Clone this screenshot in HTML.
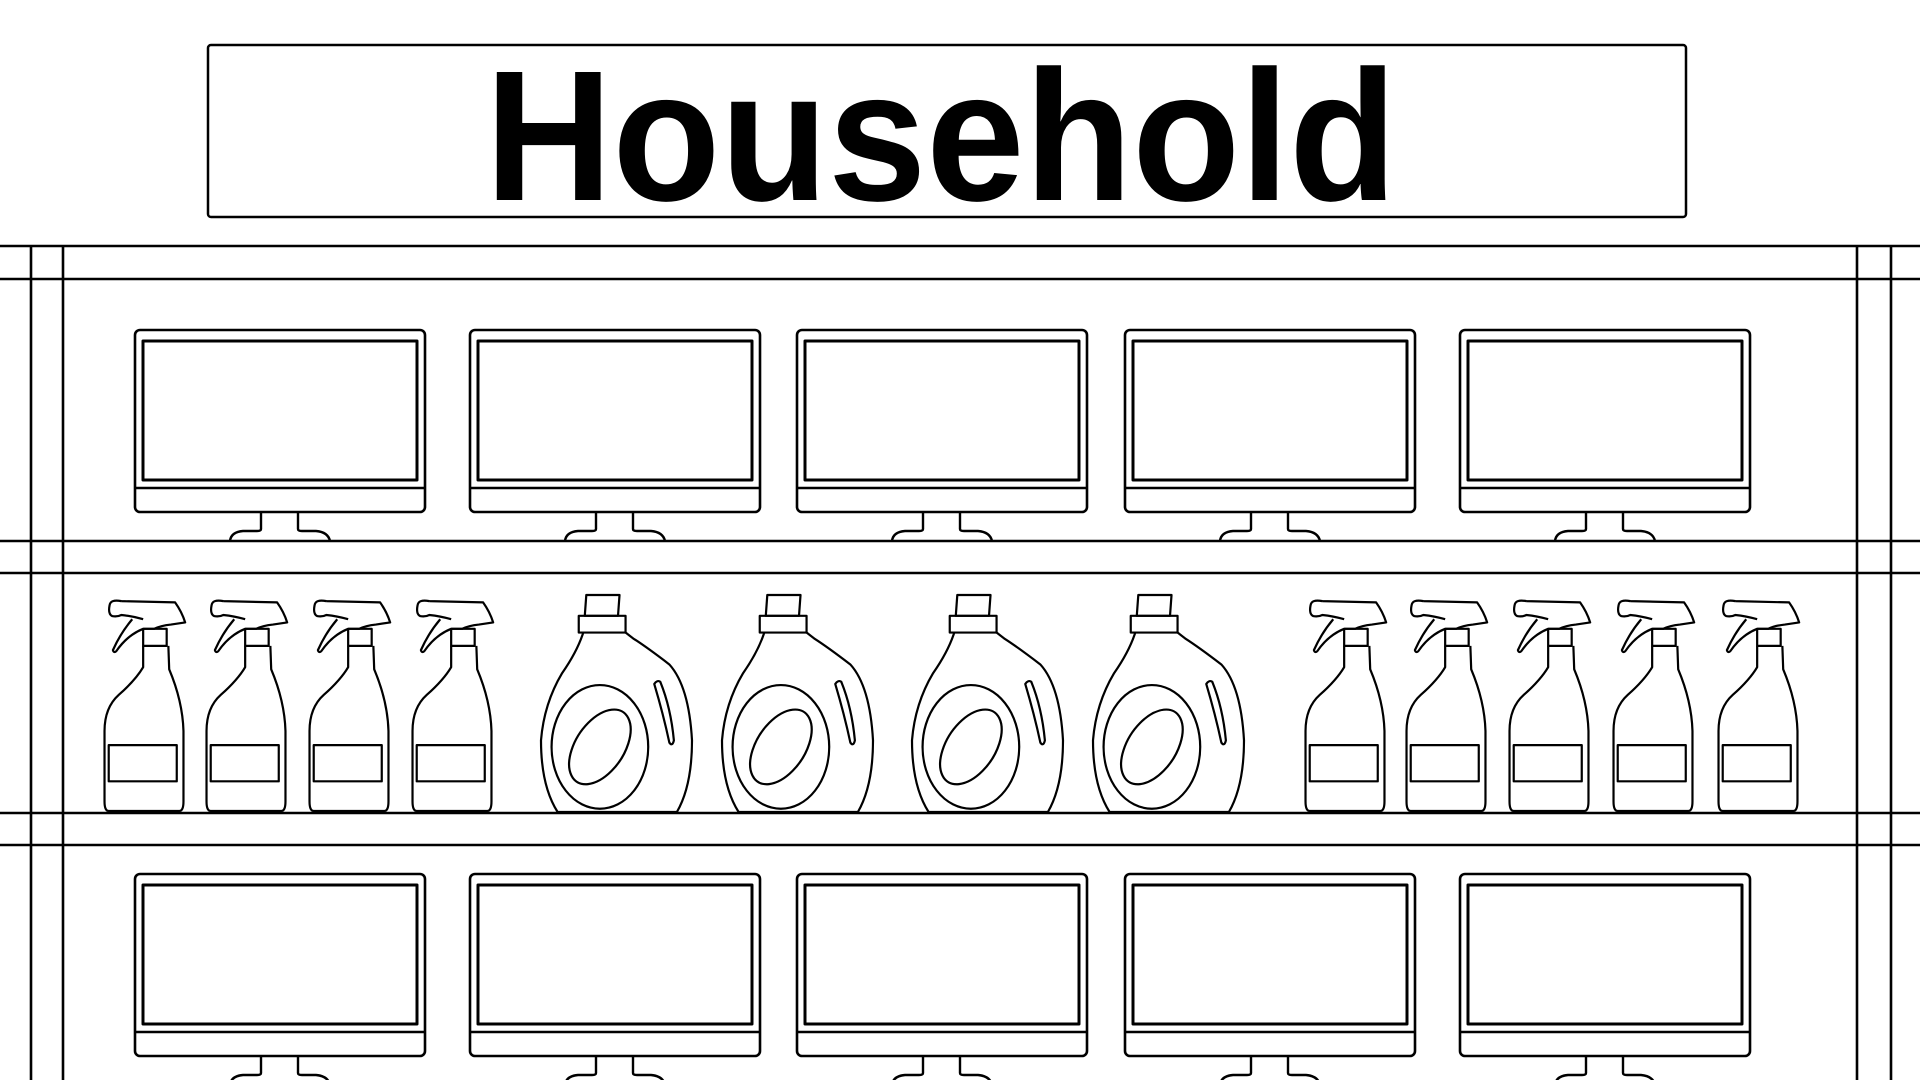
<!DOCTYPE html>
<html><head><meta charset="utf-8"><style>
html,body{margin:0;padding:0;background:#fff;width:1920px;height:1080px;overflow:hidden}
svg{display:block}
</style></head><body>
<svg width="1920" height="1080" viewBox="0 0 1920 1080" xmlns="http://www.w3.org/2000/svg">
<defs>
<symbol id="mon" viewBox="0 0 290 212" overflow="visible">
<g fill="none" stroke="#000" stroke-linejoin="round">
<rect x="0" y="0" width="290" height="182" rx="5" stroke-width="2.6"/>
<rect x="8" y="11" width="274" height="139" stroke-width="3"/>
<line x1="1" y1="158" x2="289" y2="158" stroke-width="2.6"/>
<path d="M126 182 V199 Q126 201 122 201 H108 Q96 202 95 211 M163 182 V199 Q163 201 167 201 H181 Q193 202 195 211" stroke-width="2.4"/>
</g>
</symbol>
<symbol id="spray" viewBox="0 0 100 100" preserveAspectRatio="none" overflow="visible">
<g fill="none" stroke="#000" stroke-width="2.2" stroke-linejoin="round">
<path vector-effect="non-scaling-stroke" d="M23 1 Q10 0 9 3 Q7 7 12 8 Q18 8.5 23 7.5 Q36 8 49 9.5 M23 1 L87 1.6 Q95 6 99 11 L82 12 Q70 12.5 62 14 L49 14"/>
<path vector-effect="non-scaling-stroke" d="M36 9.5 Q22 16 13 24 Q14 25.5 17 24.5 Q30 17 49 14"/>
<path vector-effect="non-scaling-stroke" d="M49 14 H77 V22 H49 Z"/>
<path vector-effect="non-scaling-stroke" d="M49 22 V32 Q40 38 20 45 Q3 51 3 62 V95 Q3 99.5 8 99.5 H92 Q97 99.5 97 95 V62 Q96 48 80 33 L79 22"/>
<rect vector-effect="non-scaling-stroke" x="8" y="68.6" width="81" height="17"/>
</g>
</symbol>
<symbol id="jug" viewBox="0 0 100 100" preserveAspectRatio="none" overflow="visible">
<g fill="none" stroke="#000" stroke-width="2.2" stroke-linejoin="round">
<path vector-effect="non-scaling-stroke" d="M30 0 H52 L51 9.6 H29 Z"/>
<path vector-effect="non-scaling-stroke" d="M25 9.6 H56 V17.3 H25 Z"/>
<path vector-effect="non-scaling-stroke" d="M28 17.3 Q24 26 14 36 Q2 50 0 67 Q0 88 11 100 H90 Q100 88 100 67 Q98 42 85 32 Q70 24 61 20 L56 17.3"/>
<ellipse vector-effect="non-scaling-stroke" cx="39" cy="70" rx="32" ry="28.5"/>
<ellipse vector-effect="non-scaling-stroke" cx="39" cy="70" rx="23" ry="13.5" transform="rotate(-35 39 70)"/>
<path vector-effect="non-scaling-stroke" d="M75 41 Q77 39 79 40 Q86 52 88 67 Q87 70 85 68 Q81 55 75 41 Z"/>
</g>
</symbol>
</defs>
<rect x="208" y="45" width="1478" height="172" rx="3" fill="none" stroke="#000" stroke-width="2.5"/>
<text x="485" y="200" textLength="912" lengthAdjust="spacingAndGlyphs" font-family="Liberation Sans, Arial, sans-serif" font-weight="bold" font-size="186" fill="#000">Household</text>
<g stroke="#000" stroke-width="2.6">
<line x1="0" y1="246" x2="1920" y2="246"/>
<line x1="0" y1="279" x2="1920" y2="279"/>
<line x1="0" y1="541" x2="1920" y2="541"/>
<line x1="0" y1="573" x2="1920" y2="573"/>
<line x1="0" y1="813" x2="1920" y2="813"/>
<line x1="0" y1="845" x2="1920" y2="845"/>
<line x1="31" y1="246" x2="31" y2="1080"/>
<line x1="63" y1="246" x2="63" y2="1080"/>
<line x1="1857" y1="246" x2="1857" y2="1080"/>
<line x1="1891" y1="246" x2="1891" y2="1080"/>
</g>
<use href="#mon" x="135" y="330" width="290" height="212"/>
<use href="#mon" x="470" y="330" width="290" height="212"/>
<use href="#mon" x="797" y="330" width="290" height="212"/>
<use href="#mon" x="1125" y="330" width="290" height="212"/>
<use href="#mon" x="1460" y="330" width="290" height="212"/>
<use href="#mon" x="135" y="874" width="290" height="212"/>
<use href="#mon" x="470" y="874" width="290" height="212"/>
<use href="#mon" x="797" y="874" width="290" height="212"/>
<use href="#mon" x="1125" y="874" width="290" height="212"/>
<use href="#mon" x="1460" y="874" width="290" height="212"/>
<use href="#spray" x="102" y="599" width="84" height="213"/>
<use href="#spray" x="204" y="599" width="84" height="213"/>
<use href="#spray" x="307" y="599" width="84" height="213"/>
<use href="#spray" x="410" y="599" width="84" height="213"/>
<use href="#spray" x="1303" y="599" width="84" height="213"/>
<use href="#spray" x="1404" y="599" width="84" height="213"/>
<use href="#spray" x="1507" y="599" width="84" height="213"/>
<use href="#spray" x="1611" y="599" width="84" height="213"/>
<use href="#spray" x="1716" y="599" width="84" height="213"/>
<use href="#jug" x="541" y="595" width="151" height="217"/>
<use href="#jug" x="722" y="595" width="151" height="217"/>
<use href="#jug" x="912" y="595" width="151" height="217"/>
<use href="#jug" x="1093" y="595" width="151" height="217"/>
</svg>
</body></html>
